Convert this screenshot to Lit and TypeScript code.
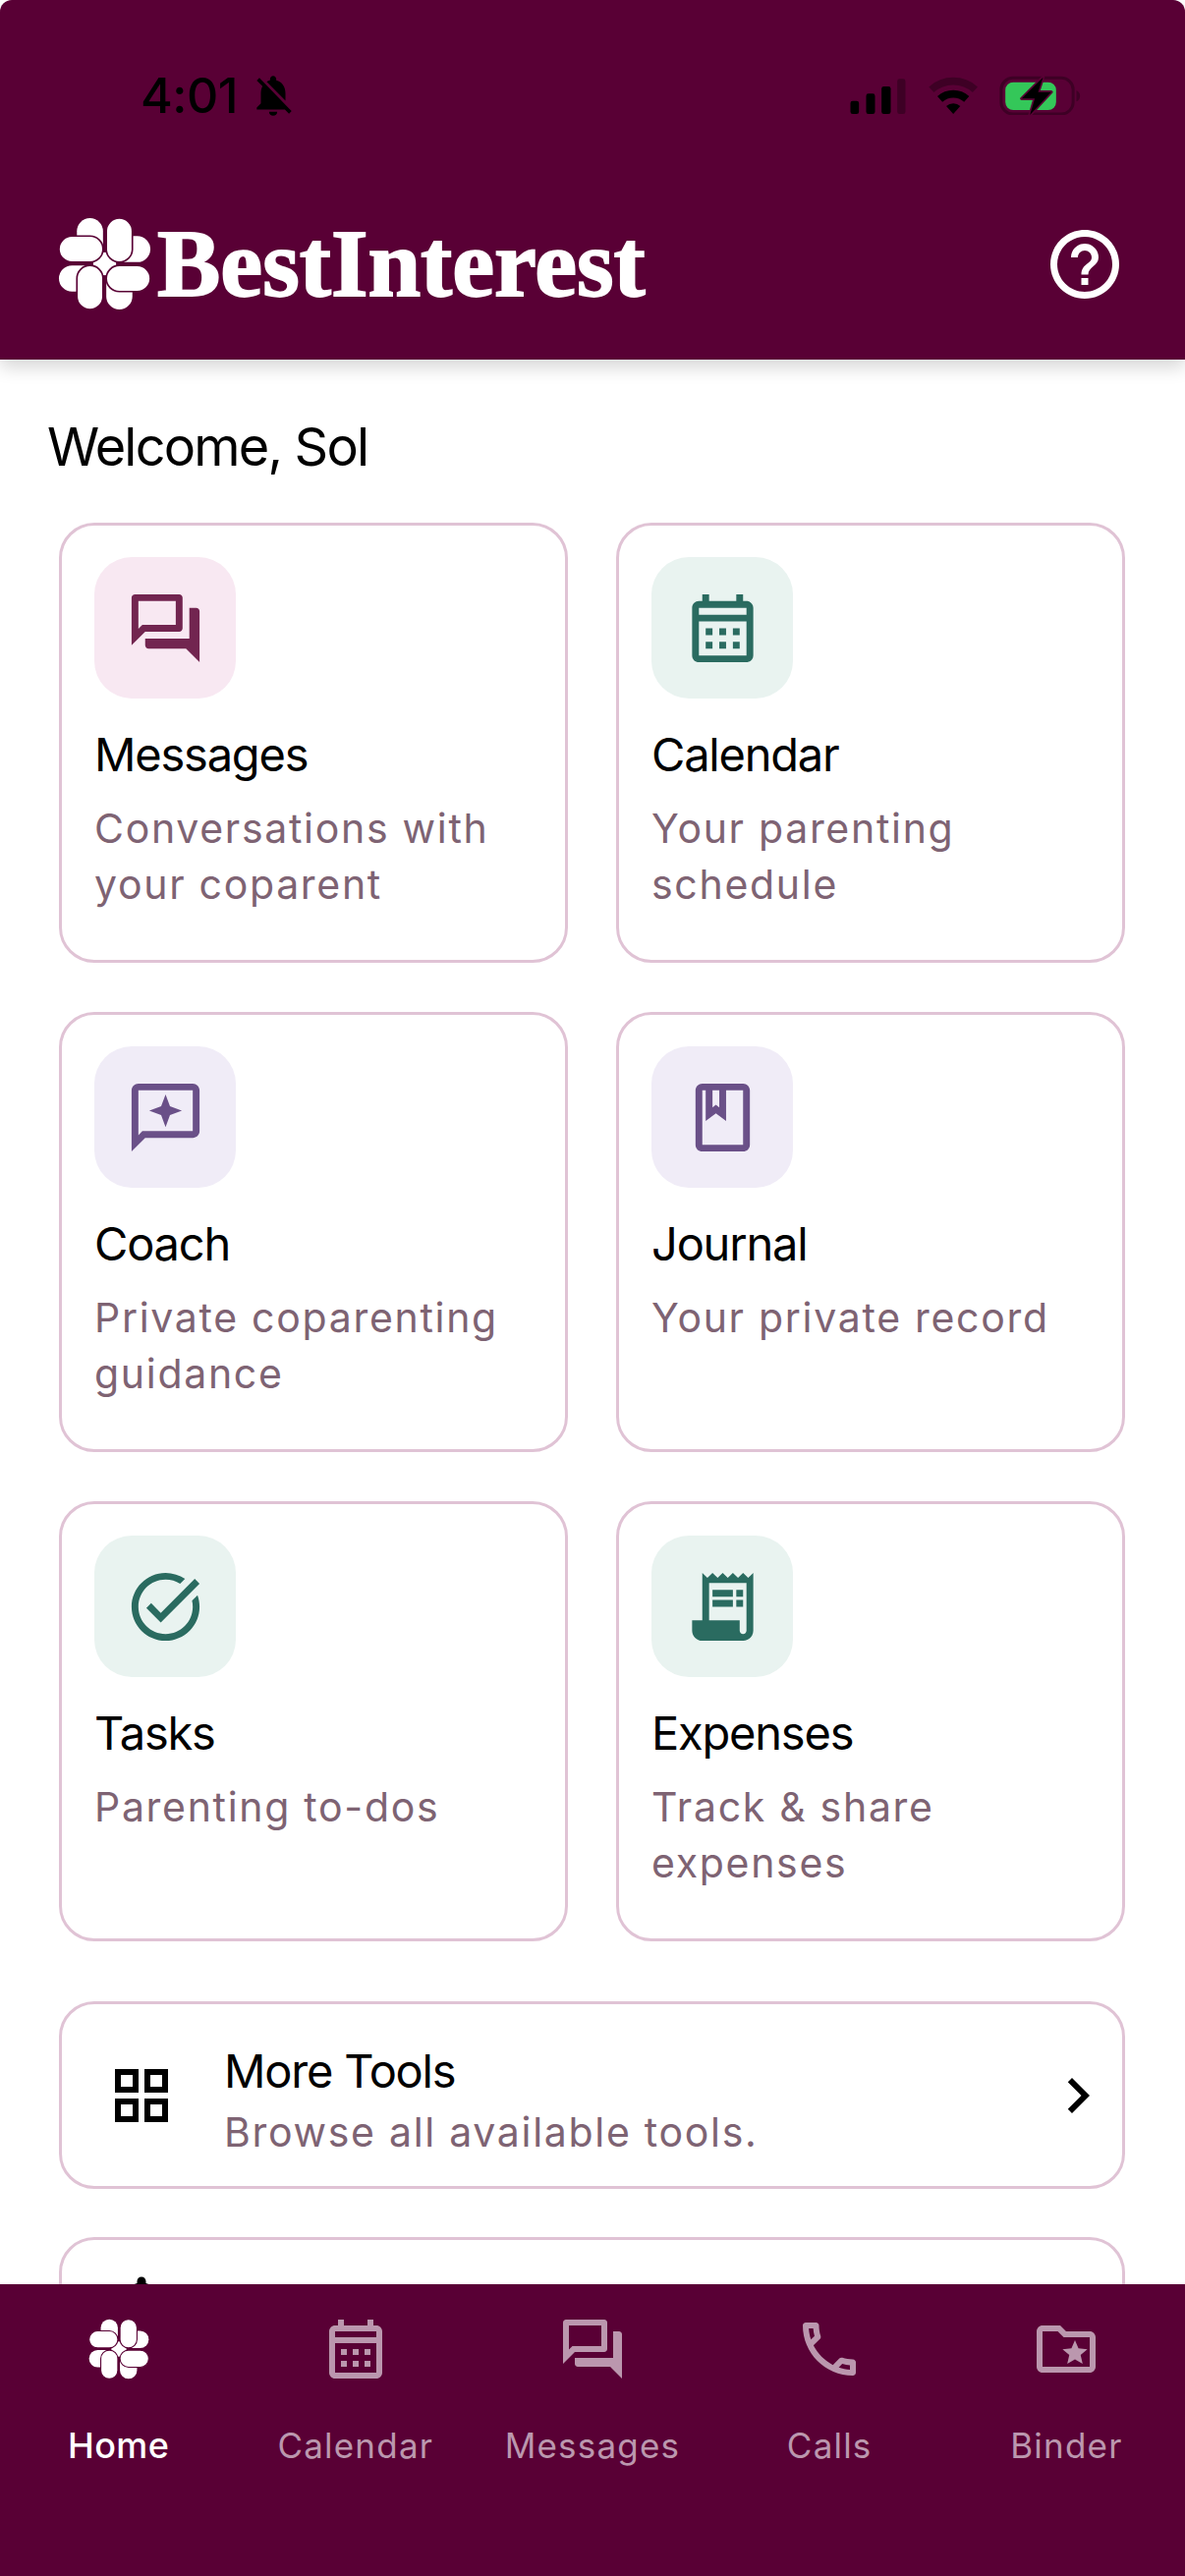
import { LitElement, html, css } from "lit";
import { customElement } from "lit/decorators.js";

const ICONS: Record<string, string> = {
  forum: "M15 4v7H5.17L4 12.17V4h11m1-2H3c-.55 0-1 .45-1 1v14l4-4h10c.55 0 1-.45 1-1V3c0-.55-.45-1-1-1zm5 4h-2v9H6v2c0 .55.45 1 1 1h11l4 4V7c0-.55-.45-1-1-1z",
  calendar: "M19 4h-1V2h-2v2H8V2H6v2H5c-1.1 0-2 .9-2 2v14c0 1.1.9 2 2 2h14c1.1 0 2-.9 2-2V6c0-1.1-.9-2-2-2zm0 16H5V10h14v10zM5 8V6h14v2H5zm2 4h2v2H7zm4 0h2v2h-2zm4 0h2v2h-2zm-8 4h2v2H7zm4 0h2v2h-2zm4 0h2v2h-2z",
  coach: "M20 2H4c-1.1 0-2 .9-2 2v18l4-4h14c1.1 0 2-.9 2-2V4c0-1.1-.9-2-2-2zm0 14H5.17L4 17.17V4h16v12zM12 5.2l1.3 3.5 3.5 1.3-3.5 1.3-1.3 3.5-1.3-3.5L7.2 10l3.500-1.300z",
  book: "M18 2H6c-1.1 0-2 .9-2 2v16c0 1.1.9 2 2 2h12c1.1 0 2-.9 2-2V4c0-1.1-.9-2-2-2zM9 4h2v5l-1-.75L9 9V4zm9 16H6V4h1v9l3-2.25L13 13V4h5v16z",
  task: "M22 5.18 10.59 16.6l-4.24-4.24 1.41-1.41 2.83 2.83 10-10L22 5.18zm-2.21 5.04c.13.57.21 1.17.21 1.78 0 4.42-3.58 8-8 8s-8-3.58-8-8 3.58-8 8-8c1.58 0 3.04.46 4.28 1.22l1.44-1.44C16.1 2.67 14.13 2 12 2 6.48 2 2 6.48 2 12s4.48 10 10 10 10-4.48 10-10c0-1.19-.22-2.33-.6-3.39l-1.61 1.61z",
  receipt: "M19.5 3.5 18 2l-1.500 1.500L15 2l-1.500 1.500L12 2l-1.500 1.500L9 2 7.500 3.500 6 2v14H3v3c0 1.660 1.340 3 3 3h12c1.660 0 3-1.340 3-3V2l-1.500 1.500zM19 19c0 .55-.45 1-1 1s-1-.45-1-1v-3H8V5h11v14zM9 7h6v2H9zm7 0h2v2h-2zm-7 3h6v2H9zm7 0h2v2h-2z",
  grid: "M3 3v8h8V3H3zm6 6H5V5h4v4zm-6 4v8h8v-8H3zm6 6H5v-4h4v4zm4-16v8h8V3h-8zm6 6h-4V5h4v4zm-6 4v8h8v-8h-8zm6 6h-4v-4h4v4z",
  chevron: "M10 6 8.590 7.410 13.170 12l-4.580 4.590L10 18l6-6z",
  call: "M6.540 5c.06.89.21 1.76.45 2.590l-1.200 1.200c-.41-1.200-.67-2.470-.76-3.790h1.510m9.860 12.020c.85.24 1.720.39 2.600.45v1.490c-1.320-.09-2.590-.35-3.800-.75l1.200-1.190M7.500 3H4c-.55 0-1 .45-1 1 0 9.390 7.610 17 17 17 .55 0 1-.45 1-1v-3.490c0-.55-.45-1-1-1-1.240 0-2.450-.2-3.570-.57-.1-.04-.21-.05-.31-.05-.26 0-.51.1-.71.29l-2.200 2.200c-2.830-1.450-5.150-3.760-6.590-6.590l2.200-2.200c.28-.28.36-.67.25-1.020C8.700 6.450 8.500 5.250 8.500 4c0-.55-.45-1-1-1z",
  folder: "M20 6h-8l-2-2H4c-1.100 0-1.990.9-1.990 2L2 18c0 1.100.9 2 2 2h16c1.100 0 2-.9 2-2V8c0-1.100-.9-2-2-2zm0 12H4V6h5.170l2 2H20v10zm-6.920-3.960L12.390 17 15 15.470 17.610 17l-.69-2.960 2.300-1.990-3.030-.26L15 9l-1.190 2.790-3.030.26z",
  help: "M11 18h2v-2h-2v2zm1-16C6.480 2 2 6.480 2 12s4.480 10 10 10 10-4.480 10-10S17.520 2 12 2zm0 18c-4.410 0-8-3.590-8-8s3.590-8 8-8 8 3.590 8 8-3.590 8-8 8zm0-14c-2.210 0-4 1.790-4 4h2c0-1.100.9-2 2-2s2 .9 2 2c0 2-3 1.750-3 5h2c0-2.250 3-2.500 3-5 0-2.210-1.790-4-4-4z",
  belloff: "M20 18.690 7.840 6.140 5.270 3.490 4 4.760l2.800 2.800v.01c-.52.99-.8 2.160-.8 3.420v5l-2 2v1h13.730l2 2L21 19.720l-1-1.030zM12 22c1.110 0 2-.89 2-2h-4c0 1.110.89 2 2 2zm6-7.320V11c0-3.080-1.640-5.640-4.500-6.320V4c0-.83-.67-1.500-1.500-1.500s-1.500.67-1.500 1.500v.68c-.15.03-.29.08-.42.12-.1.03-.2.07-.3.11h-.01c-.2.08-.4.18-.59.28-.1.05-.2.12-.3.18L18 14.680z",
  bell: "M12 22c1.100 0 2-.9 2-2h-4c0 1.100.9 2 2 2zm6-6v-5c0-3.070-1.630-5.640-4.500-6.320V4c0-.83-.67-1.500-1.500-1.500s-1.500.67-1.500 1.500v.68C7.640 5.360 6 7.920 6 11v5l-2 2v1h16v-1l-2-2z",
};

const icon = (name: string, cls: string) =>
  html`<svg class=${cls} viewBox="0 0 24 24"><path d=${ICONS[name]}></path></svg>`;

const flower = (cls: string) => html`<svg class=${cls} viewBox="-3 -3 286 286">
  <g class="petal">
    <rect x="55" y="0" width="80" height="135" rx="40"></rect>
    <rect x="145" y="55" width="135" height="80" rx="40"></rect>
    <rect x="145" y="145" width="80" height="135" rx="40"></rect>
    <rect x="0" y="145" width="135" height="80" rx="40"></rect>
    <rect x="105" y="105" width="70" height="70"></rect>
  </g>
  <g class="petal front">
    <rect x="145" y="0" width="80" height="135" rx="40"></rect>
    <rect x="0" y="55" width="135" height="80" rx="40"></rect>
    <rect x="55" y="145" width="80" height="135" rx="40"></rect>
    <rect x="145" y="145" width="135" height="80" rx="40"></rect>
  </g>
</svg>`;

const CARDS = [
  { t: "Messages", s: "Conversations with your coparent", i: "forum", c: "pink" },
  { t: "Calendar", s: "Your parenting schedule", i: "calendar", c: "green" },
  { t: "Coach", s: "Private coparenting guidance", i: "coach", c: "purple" },
  { t: "Journal", s: "Your private record", i: "book", c: "purple" },
  { t: "Tasks", s: "Parenting to-dos", i: "task", c: "green" },
  { t: "Expenses", s: "Track & share expenses", i: "receipt", c: "green" },
];

const NAV = [
  { l: "Calendar", i: "calendar" },
  { l: "Messages", i: "forum" },
  { l: "Calls", i: "call" },
  { l: "Binder", i: "folder" },
];

@customElement("app-root")
export class AppRoot extends LitElement {
  static styles = css`
    :host {
      display: flex;
      flex-direction: column;
      width: 1206px;
      height: 2622px;
      overflow: hidden;
      background: #fff;
      font-family: Inter, "Liberation Sans", sans-serif;
      color: #000;
    }
    svg { display: block; flex: none; }
    .petal rect { fill: #fff; }
    .petal.front rect { stroke: #590035; stroke-width: 5; }

    .header {
      flex: none;
      height: 366px;
      box-sizing: border-box;
      background: #590035;
      border-radius: 12px 12px 0 0;
      box-shadow: 0 8px 18px rgba(0, 0, 0, 0.16);
      position: relative;
      z-index: 1;
      display: flex;
      flex-direction: column;
    }
    .status {
      height: 40px;
      margin-top: 77px;
      padding: 0 106px 0 143px;
      display: flex;
      align-items: center;
    }
    .time {
      font-size: 50px;
      font-weight: 500;
      line-height: 40px;
      letter-spacing: -0.5px;
      width: 110px;
    }
    .bell { width: 50px; height: 50px; fill: #000; }
    .sys { width: 237px; height: 40px; margin-left: auto; }
    .brand {
      margin-top: 105px;
      height: 93px;
      padding: 0 60px;
      display: flex;
      align-items: center;
    }
    .logo-mark { width: 95px; height: 95px; margin-left: -1px; }
    .logo-text {
      margin-left: 6px;
      font-family: "Liberation Serif", serif;
      font-weight: 700;
      font-size: 96.5px;
      line-height: 93px;
      color: #fff;
      -webkit-text-stroke: 1.8px #fff;
    }
    .help { width: 84px; height: 84px; margin-left: auto; fill: #fff; }

    .main { flex: 1; min-height: 0; overflow: hidden; }
    .welcome {
      margin: 59px 0 0 48px;
      font-size: 54px;
      line-height: 60px;
      letter-spacing: -1.8px;
    }
    .grid {
      margin: 47px 61px 0 60px;
      display: grid;
      grid-template-columns: 518px 518px;
      grid-auto-rows: 448px;
      column-gap: 49px;
      row-gap: 50px;
    }
    .card {
      box-sizing: border-box;
      border: 3px solid #e0c3d5;
      border-radius: 36px;
      padding: 32px 33px;
      display: flex;
      flex-direction: column;
    }
    .badge {
      width: 144px;
      height: 144px;
      border-radius: 38px;
      display: flex;
      align-items: center;
      justify-content: center;
    }
    .badge svg { width: 83px; height: 83px; }
    .pink { background: #f8e8f2; fill: #722550; }
    .green { background: #e9f3f0; fill: #2a6b60; }
    .purple { background: #f0ecf7; fill: #6a5088; }
    .title {
      margin-top: 29px;
      font-size: 47px;
      font-weight: 420;
      line-height: 56px;
      letter-spacing: -1.2px;
    }
    .sub {
      color: #7e6373;
      font-size: 41px;
      line-height: 57px;
      letter-spacing: 1.7px;
    }
    .card .sub { margin-top: 19px; }
    .row {
      box-sizing: border-box;
      margin: 61px 61px 0 60px;
      height: 191px;
      border: 3px solid #e0c3d5;
      border-radius: 36px;
      padding: 0 9px 0 45px;
      display: flex;
      align-items: center;
    }
    .row + .row { margin-top: 49px; align-items: flex-start; padding-top: 30px; }
    .row-icon { width: 72px; height: 72px; fill: #000; }
    .row-text { margin-left: 48px; padding-top: 13px; }
    .row-text .title { margin-top: 0; }
    .row-text .sub { margin-top: 6px; }
    .chev { width: 72px; height: 72px; margin-left: auto; fill: #000; }

    .nav {
      flex: none;
      height: 297px;
      box-sizing: border-box;
      background: #590035;
      position: relative;
      z-index: 2;
      padding-top: 30px;
      display: grid;
      grid-template-columns: repeat(5, 1fr);
      align-items: start;
    }
    .tab {
      display: flex;
      flex-direction: column;
      align-items: center;
      color: #bb97ae;
      fill: #bb97ae;
      font-size: 35px;
      line-height: 44px;
      letter-spacing: 1.2px;
    }
    .tab .tab-icon { width: 72px; height: 72px; }
    .tab .home-icon { width: 62px; height: 62px; margin: 5px; }
    .tab span { margin-top: 40px; }
    .tab.active { color: #fff; font-weight: 500; font-size: 36px; letter-spacing: 0.4px; }
  `;

  render() {
    return html`
      <header class="header">
        <div class="status">
          <span class="time">4:01</span>
          ${icon("belloff", "bell")}
          <svg class="sys" viewBox="130 50 710 120">
            <g fill="#000">
              <rect x="137" y="127" width="26" height="40" rx="7"></rect>
              <rect x="185" y="105" width="27" height="62" rx="7"></rect>
              <rect x="232" y="83" width="28" height="84" rx="7"></rect>
            </g>
            <rect x="280" y="60" width="25" height="107" rx="7" fill="#000" opacity="0.3"></rect>
            <g fill="none" stroke="#000" stroke-width="23">
              <path d="M384.100 92.700A100 100 0 0 1 517.900 92.700" opacity="0.3"></path>
              <path d="M410.200 121.700A61 61 0 0 1 491.800 121.700"></path>
            </g>
            <path d="M451 167 429.600 143.200A32 32 0 0 1 472.400 143.200Z" fill="#000"></path>
            <rect x="597" y="57" width="220" height="110" rx="36" fill="none" stroke="#000" stroke-width="9" opacity="0.3"></rect>
            <path d="M827 95c7 3 11 9 11 17s-4 14-11 17z" fill="#000" opacity="0.3"></path>
            <rect x="610" y="70" width="155" height="85" rx="24" fill="#34c759"></rect>
            <path d="M725 55 660 120H700L685 170 750 100H710Z" fill="#000" stroke="#590035" stroke-width="10" paint-order="stroke" stroke-linejoin="round"></path>
          </svg>
        </div>
        <div class="brand">
          ${flower("logo-mark")}
          <span class="logo-text">BestInterest</span>
          ${icon("help", "help")}
        </div>
      </header>
      <main class="main">
        <div class="welcome">Welcome, Sol</div>
        <section class="grid">
          ${CARDS.map(
            (c) => html`<article class="card">
              <div class="badge ${c.c}">${icon(c.i, "")}</div>
              <div class="title">${c.t}</div>
              <div class="sub">${c.s}</div>
            </article>`
          )}
        </section>
        <div class="row">
          ${icon("grid", "row-icon")}
          <div class="row-text">
            <div class="title">More Tools</div>
            <div class="sub">Browse all available tools.</div>
          </div>
          ${icon("chevron", "chev")}
        </div>
        <div class="row">${icon("bell", "row-icon")}</div>
      </main>
      <nav class="nav">
        <div class="tab active">${flower("home-icon")}<span>Home</span></div>
        ${NAV.map(
          (n) => html`<div class="tab">${icon(n.i, "tab-icon")}<span>${n.l}</span></div>`
        )}
      </nav>
    `;
  }
}
